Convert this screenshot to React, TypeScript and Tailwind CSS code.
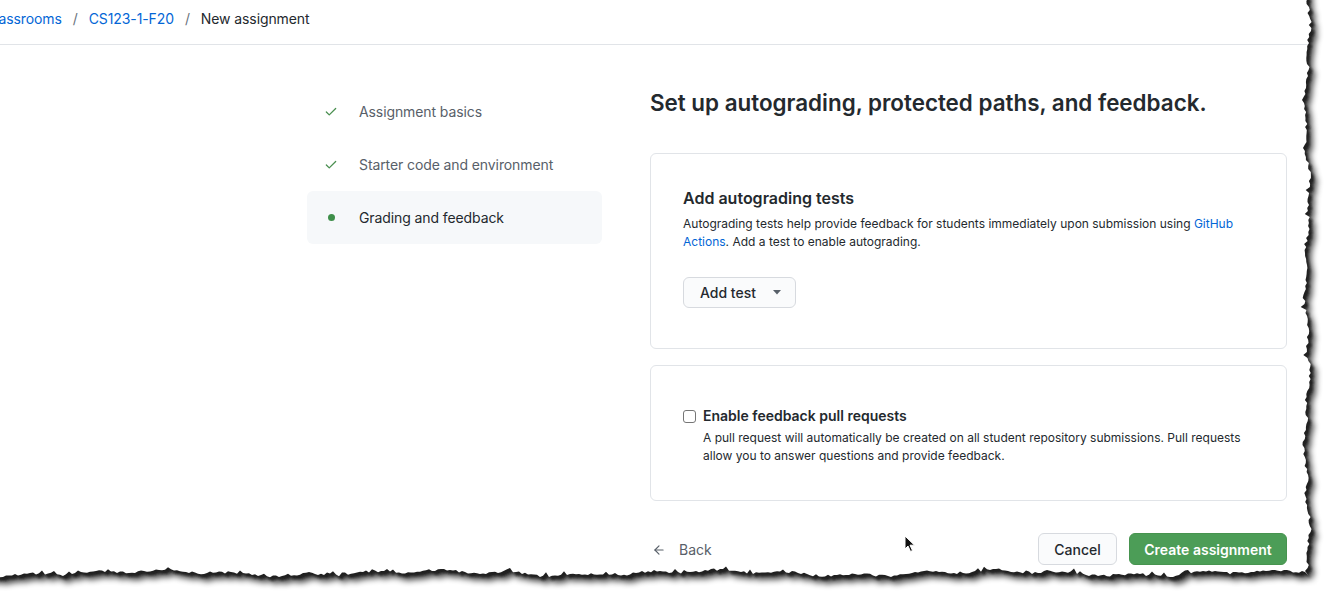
import React from "react";
import { Check, ArrowLeft } from "lucide-react";

function rng(seed: number) {
  let s = seed;
  return () => {
    s = (s * 16807) % 2147483647;
    return (s - 1) / 2147483646;
  };
}

function tornPath() {
  const r = rng(12345);
  const pts: [number, number][] = [];
  pts.push([-20, -20]);
  const p1 = r() * 6, p2 = r() * 6;
  for (let y = -20; y <= 572; y += 3) {
    const x =
      1307 +
      2 * Math.sin(y / 27 + p1) +
      1.4 * Math.sin(y / 8 + p2) +
      (r() - 0.5) * 3 +
      (r() > 0.93 ? -3 : 0);
    pts.push([x, y]);
  }
  pts.push([1308, 575]);
  const q1 = r() * 6, q2 = r() * 6;
  for (let x = 1305; x >= -20; x -= 3) {
    const y =
      573 +
      2.2 * Math.sin(x / 45 + q1) +
      1.3 * Math.sin(x / 11 + q2) +
      (r() - 0.5) * 2.6 -
      (r() > 0.92 ? 3 : 0);
    pts.push([x, y]);
  }
  pts.push([-20, 575]);
  return "M" + pts.map(([x, y]) => `${x.toFixed(1)},${y.toFixed(1)}`).join(" L") + " Z";
}

function TornEdge() {
  const d = tornPath();
  return (
    <svg
      className="absolute left-0 top-0 pointer-events-none"
      width={1326}
      height={593}
      viewBox="0 0 1326 593"
    >
      <defs>
        <filter id="sh" x="-10%" y="-10%" width="120%" height="120%">
          <feGaussianBlur stdDeviation="3" />
        </filter>
        <filter id="sh2" x="-10%" y="-10%" width="120%" height="120%">
          <feGaussianBlur stdDeviation="1.2" />
        </filter>
        <mask id="outside">
          <rect x="0" y="0" width="1326" height="593" fill="white" />
          <path d={d} fill="black" />
        </mask>
      </defs>
      <g mask="url(#outside)">
        <rect x="0" y="0" width="1326" height="593" fill="white" />
        <path d={d} fill="#000" opacity="0.75" transform="translate(6,7)" filter="url(#sh)" />
        <path d={d} fill="#1a1a1a" opacity="0.9" transform="translate(3,3.5)" filter="url(#sh2)" />
      </g>
    </svg>
  );
}

function Cursor() {
  return (
    <svg className="absolute left-[904px] top-[535px]" width="12" height="18" viewBox="0 0 12 18">
      <path d="M1 1 L1 14 L4 11 L6.5 16.5 L8.5 15.5 L6 10.2 L10.5 10.2 Z" fill="#111" stroke="#fff" strokeWidth="1" />
    </svg>
  );
}

export default function App() {
  const font = { fontFamily: "Inter, 'Noto Sans', sans-serif" };
  return (
    <div className="relative w-[1326px] h-[593px] overflow-hidden bg-white text-[#24292e]" style={font}>
      {/* header */}
      <div className="h-[45px] border-b border-[#e1e4e8] flex items-center pb-[8px] text-[14px]">
        <div className="flex items-center -ml-[15px] tracking-[-0.1px]">
          <span className="text-[#0366d6]">Classrooms</span>
          <span className="text-[#6a737d] mx-[11px]">/</span>
          <span className="text-[#0366d6]">CS123-1-F20</span>
          <span className="text-[#6a737d] mx-[11px]">/</span>
          <span className="text-[#24292e]">New assignment</span>
        </div>
      </div>

      {/* body */}
      <div className="flex gap-[48px] ml-[307px] pt-[40px]">
        {/* sidebar */}
        <div className="w-[295px] flex flex-col text-[14px] tracking-[-0.1px]">
          <div className="h-[53px] flex items-center pl-[10px] gap-[14px] text-[#586069]">
            <div className="w-7 flex justify-center">
              <Check size={14} strokeWidth={2.2} color="#4a8f50" />
            </div>
            <span>Assignment basics</span>
          </div>
          <div className="h-[53px] flex items-center pl-[10px] gap-[14px] text-[#586069]">
            <div className="w-7 flex justify-center">
              <Check size={14} strokeWidth={2.2} color="#4a8f50" />
            </div>
            <span>Starter code and environment</span>
          </div>
          <div className="h-[53px] flex items-center pl-[10px] gap-[14px] bg-[#f6f8fa] rounded-[6px] text-[#24292e]">
            <div className="w-7 flex justify-center">
              <div className="w-[7px] h-[7px] rounded-full bg-[#3f8f4a]" />
            </div>
            <span>Grading and feedback</span>
          </div>
        </div>

        {/* main */}
        <div className="w-[637px] flex flex-col">
          <h1 className="text-[22.4px] leading-[36px] font-semibold">
            Set up autograding, protected paths, and feedback.
          </h1>

          <div className="mt-[32px] border border-[#e1e4e8] rounded-[6px] px-[32px] pt-[32px] pb-[40px]">
            <h2 className="text-[16px] leading-[24px] font-semibold">Add autograding tests</h2>
            <p className="mt-[5px] text-[12px] leading-[18px] text-[#24292e]">
              <span className="block whitespace-nowrap">
                Autograding tests help provide feedback for students immediately upon submission using{" "}
                <span className="text-[#0366d6]">GitHub</span>
              </span>
              <span className="block whitespace-nowrap">
                <span className="text-[#0366d6]">Actions</span>. Add a test to enable autograding.
              </span>
            </p>
            <div className="mt-[26px]">
              <button className="h-[31px] w-[113px] flex items-center pl-[16px] gap-[17px] bg-[#fafbfc] border border-[#d7dadf] rounded-[6px] text-[14px] font-medium text-[#24292e]">
                <span>Add test</span>
                <svg width="8" height="5" viewBox="0 0 8 5">
                  <path d="M0 0 L8 0 L4 4.5 Z" fill="#586069" />
                </svg>
              </button>
            </div>
          </div>

          <div className="mt-[16px] border border-[#e1e4e8] rounded-[6px] px-[32px] pt-[40px] pb-[35px]">
            <div className="flex items-start gap-[7px]">
              <div className="mt-[4px] w-[13px] h-[13px] border border-[#767676] rounded-[3px] bg-white shrink-0" />
              <div>
                <div className="text-[14px] leading-[20px] font-semibold">Enable feedback pull requests</div>
                <div className="mt-[3px] text-[12px] leading-[18px] text-[#24292e]">
                  <span className="block whitespace-nowrap">
                    A pull request will automatically be created on all student repository submissions. Pull requests
                  </span>
                  <span className="block whitespace-nowrap">allow you to answer questions and provide feedback.</span>
                </div>
              </div>
            </div>
          </div>

          <div className="mt-[32px] flex items-center justify-between">
            <div className="flex items-center gap-[13px] pl-[2px] text-[14px] text-[#586069] pt-[1px]">
              <ArrowLeft size={14} strokeWidth={2} />
              <span>Back</span>
            </div>
            <div className="flex items-center gap-[12px]">
              <button className="h-[32px] w-[79px] bg-[#fafbfc] border border-[#d7dadf] rounded-[6px] text-[14px] font-medium text-[#24292e]">
                Cancel
              </button>
              <button className="h-[32px] w-[158px] bg-[#4c9d57] border border-[#47944f] rounded-[6px] text-[14px] font-semibold text-white">
                Create assignment
              </button>
            </div>
          </div>
        </div>
      </div>

      <Cursor />
      <TornEdge />
    </div>
  );
}
